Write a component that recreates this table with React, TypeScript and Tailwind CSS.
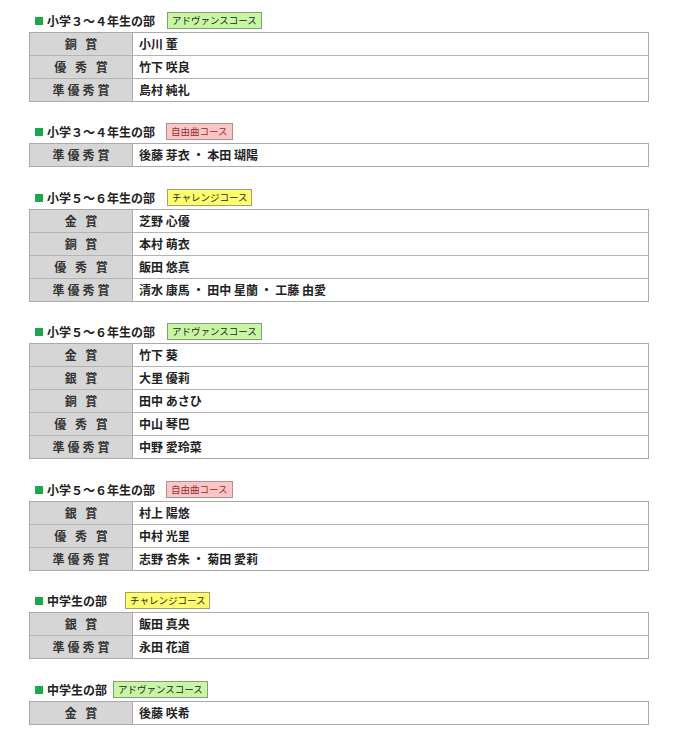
import React from "react";

type Badge = "adv" | "free" | "chal";

const badgeInfo: Record<Badge, { text: string; cls: string }> = {
  adv: { text: "アドヴァンスコース", cls: "bg-[#c8f7a4] border-[#8a9a80]" },
  free: { text: "自由曲コース", cls: "bg-[#fcc6c6] border-[#b09090] text-[#8a3030]" },
  chal: { text: "チャレンジコース", cls: "bg-[#ffff6e] border-[#a0a070]" },
};

type Section = { title: string; badge: Badge; gap: string; top: string; rows: [string, string][] };

const sections: Section[] = [
  {
    title: "小学３～４年生の部",
    badge: "adv",
    gap: "ml-[12px]",
    top: "",
    rows: [
      ["銅 賞", "小川 董"],
      ["優 秀 賞", "竹下 咲良"],
      ["準優秀賞", "島村 純礼"],
    ],
  },
  {
    title: "小学３～４年生の部",
    badge: "free",
    gap: "ml-[11px]",
    top: "mt-[21px]",
    rows: [["準優秀賞", "後藤 芽衣 ・ 本田 瑚陽"]],
  },
  {
    title: "小学５～６年生の部",
    badge: "chal",
    gap: "ml-[12px]",
    top: "mt-[22px]",
    rows: [
      ["金 賞", "芝野 心優"],
      ["銅 賞", "本村 萌衣"],
      ["優 秀 賞", "飯田 悠真"],
      ["準優秀賞", "清水 康馬 ・ 田中 星蘭 ・ 工藤 由愛"],
    ],
  },
  {
    title: "小学５～６年生の部",
    badge: "adv",
    gap: "ml-[12px]",
    top: "mt-[21px]",
    rows: [
      ["金 賞", "竹下 葵"],
      ["銀 賞", "大里 優莉"],
      ["銅 賞", "田中 あさひ"],
      ["優 秀 賞", "中山 琴巴"],
      ["準優秀賞", "中野 愛玲菜"],
    ],
  },
  {
    title: "小学５～６年生の部",
    badge: "free",
    gap: "ml-[11px]",
    top: "mt-[22px]",
    rows: [
      ["銀 賞", "村上 陽悠"],
      ["優 秀 賞", "中村 光里"],
      ["準優秀賞", "志野 杏朱 ・ 菊田 愛莉"],
    ],
  },
  {
    title: "中学生の部",
    badge: "chal",
    gap: "ml-[18px]",
    top: "mt-[21px]",
    rows: [
      ["銀 賞", "飯田 真央"],
      ["準優秀賞", "永田 花道"],
    ],
  },
  {
    title: "中学生の部",
    badge: "adv",
    gap: "ml-[6px]",
    top: "mt-[22px]",
    rows: [["金 賞", "後藤 咲希"]],
  },
];

export default function App() {
  return (
    <div
      className="w-[685px] min-h-[736px] bg-white pt-[12px] pl-[29px] text-[#222]"
      style={{ fontFamily: '"Noto Sans CJK JP", "Noto Sans", sans-serif' }}
    >
      {sections.map((s, i) => (
        <div key={i} className={s.top}>
          <div className="flex h-[17px] items-center mb-[3px]">
            <span className="ml-[6px] w-[8px] h-[8px] bg-[#1aa84a]" />
            <span className="ml-[4px] text-[12px] font-bold leading-none">{s.title}</span>
            <span
              className={`${s.gap} h-[17px] flex items-center border px-[4px] text-[9.5px] leading-none ${badgeInfo[s.badge].cls}`}
            >
              {badgeInfo[s.badge].text}
            </span>
          </div>
          <div className="w-[620px] border-x border-b border-[#aaaaaa]">
            {s.rows.map(([label, name], j) => (
              <div
                key={j}
                className={`flex h-[23px] border-t ${j > 0 ? "border-[#b4b4b4]" : "border-[#aaaaaa]"}`}
              >
                <div className="w-[103px] shrink-0 bg-[#d6d6d6] border-r border-[#aaaaaa] flex items-center justify-center pl-[3px] text-[12px] font-bold tracking-[3px] text-[#333] whitespace-pre">
                  {label}
                </div>
                <div className="flex items-center pl-[6px] text-[12px] font-bold text-[#222] whitespace-pre">
                  {name}
                </div>
              </div>
            ))}
          </div>
        </div>
      ))}
    </div>
  );
}
